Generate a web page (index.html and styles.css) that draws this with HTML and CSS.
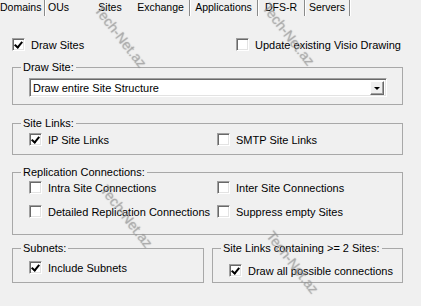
FILE: index.html
```html
<!DOCTYPE html>
<html lang="en">
<head>
	<meta charset="UTF-8">
	<title>Sites</title>
	<link rel="stylesheet" href="styles.css">
</head>
<body>
	<div class="tabs">
		<span class="tab w-domains">Domains</span>
		<span class="tab w-ous nosep">OUs</span>
		<span class="tab w-sites nosep">Sites</span>
		<span class="tab w-exch">Exchange</span>
		<span class="tab w-apps">Applications</span>
		<span class="tab w-dfs">DFS-R</span>
		<span class="tab w-srv">Servers</span>
	</div>

	<div class="page">
		<div class="toprow">
			<label class="chk col-a"><span class="cb on"></span>Draw Sites</label>
			<label class="chk"><span class="cb"></span>Update existing Visio Drawing</label>
		</div>

		<fieldset class="group g-draw">
			<legend>Draw Site:</legend>
			<div class="combo">
				<span class="combo_text">Draw entire Site Structure</span>
				<span class="combo_btn"></span>
			</div>
		</fieldset>

		<fieldset class="group g-links">
			<legend>Site Links:</legend>
			<div class="row">
				<label class="chk col-1"><span class="cb on"></span>IP Site Links</label>
				<label class="chk"><span class="cb"></span>SMTP Site Links</label>
			</div>
		</fieldset>

		<fieldset class="group g-repl">
			<legend>Replication Connections:</legend>
			<div class="row">
				<label class="chk col-1"><span class="cb"></span>Intra Site Connections</label>
				<label class="chk"><span class="cb"></span>Inter Site Connections</label>
			</div>
			<div class="row row2">
				<label class="chk col-1"><span class="cb"></span>Detailed Replication Connections</label>
				<label class="chk"><span class="cb"></span>Suppress empty Sites</label>
			</div>
		</fieldset>

		<div class="bottom">
			<fieldset class="group g-subnets">
				<legend>Subnets:</legend>
				<div class="row">
					<label class="chk"><span class="cb on"></span>Include Subnets</label>
				</div>
			</fieldset>
			<fieldset class="group g-multi">
				<legend>Site Links containing &gt;= 2 Sites:</legend>
				<div class="row">
					<label class="chk"><span class="cb on"></span>Draw all possible connections</label>
				</div>
			</fieldset>
		</div>
	</div>

	<!-- watermark of the source picture -->
	<span class="mark m1">Tech-Net.az</span>
	<span class="mark m2">Tech-Net.az</span>
	<span class="mark m3">Tech-Net.az</span>
	<span class="mark m4">Tech-Net.az</span>
</body>
</html>
```

FILE: styles.css
```css
body{
	margin: 0;
	background: #f0f0f0;
	font-family: "Liberation Sans", Arial, sans-serif;
	font-size: 11px;
	color: #000;
	width: 421px;
	height: 306px;
	overflow: hidden;
	position: relative;
}
.tabs{
	display: flex;
	height: 16px;
	line-height: 14px;
	font-size: 10.5px;
}
.tab{
	box-sizing: border-box;
	text-align: center;
	border-right: 1px solid #8a8a8a;
	box-shadow: 1px 0 0 #fff;
	white-space: nowrap;
	overflow: hidden;
}
.nosep{
	border-right: none;
	box-shadow: none;
}
.w-domains{ width: 45px; text-align: left; }
.w-ous{ width: 43px; text-align: left; padding-left: 3px; }
.w-sites{ width: 44px; }
.w-exch{ width: 58px; }
.w-apps{ width: 68px; }
.w-dfs{ width: 47px; }
.w-srv{ width: 45px; }
.page{
	padding: 22px 0 0 12px;
}
.toprow{
	display: flex;
	height: 13px;
	align-items: center;
}
.col-a{
	width: 224px;
}
.chk{
	display: flex;
	align-items: center;
	white-space: nowrap;
	height: 13px;
}
.cb{
	width: 13px;
	height: 13px;
	box-sizing: border-box;
	background: #fff;
	border-top: 1px solid #a0a0a0;
	border-left: 1px solid #a0a0a0;
	border-right: 1px solid #fff;
	border-bottom: 1px solid #fff;
	box-shadow: inset 1px 1px 0 #696969, inset -1px -1px 0 #e3e3e3;
	margin-right: 6px;
	flex: none;
	position: relative;
}
.cb.on::after{
	content: "";
	position: absolute;
	left: 3px;
	top: 1px;
	width: 3px;
	height: 6px;
	border-right: 2px solid #000;
	border-bottom: 2px solid #000;
	transform: rotate(40deg);
}
.group{
	margin: 0;
	padding: 0;
	border: 1px solid #a8a8a8;
	width: 391px;
	box-sizing: border-box;
	min-width: 0;
}
.group legend{
	margin-left: 8px;
	padding: 0 2px;
	line-height: 13px;
}
.g-draw{
	margin-top: 10px;
	padding-bottom: 7px;
}
.combo{
	display: flex;
	align-items: center;
	margin: 4px 0 0 16px;
	width: 358px;
	height: 19px;
	box-sizing: border-box;
	background: #fff;
	border-top: 1px solid #a0a0a0;
	border-left: 1px solid #a0a0a0;
	border-right: 1px solid #fff;
	border-bottom: 1px solid #fff;
	box-shadow: inset 1px 1px 0 #696969, inset -1px -1px 0 #e3e3e3;
	padding: 0 2px 0 3px;
}
.combo_text{
	flex: 1;
}
.combo_btn{
	width: 14px;
	height: 14px;
	box-sizing: border-box;
	background: #f0f0f0;
	border-top: 1px solid #fff;
	border-left: 1px solid #fff;
	border-right: 1px solid #696969;
	border-bottom: 1px solid #696969;
	box-shadow: inset -1px -1px 0 #a0a0a0;
	position: relative;
}
.combo_btn::after{
	content: "";
	position: absolute;
	left: 3px;
	top: 5px;
	border-left: 3px solid transparent;
	border-right: 3px solid transparent;
	border-top: 3px solid #000;
}
.g-links{
	margin-top: 12px;
	padding-bottom: 8px;
}
.row{
	display: flex;
	margin: 3px 0 0 16px;
}
.col-1{
	width: 188px;
}
.g-repl{
	margin-top: 11px;
	padding-bottom: 16px;
}
.g-repl .row{
	margin-top: 2px;
}
.g-repl .row2{
	margin-top: 11px;
}
.bottom{
	display: flex;
	gap: 8px;
	margin-top: 7px;
}
.g-subnets{
	width: 192px;
	padding-bottom: 5px;
}
.g-subnets .row{
	margin-top: 6px;
}
.g-multi{
	width: 191px;
	padding-bottom: 5px;
}
.g-multi .row{
	margin-top: 9px;
}
.mark{
	position: absolute;
	font-size: 14px;
	color: rgba(170,170,170,0.5);
	text-shadow: 0 0 1px rgba(90,90,90,0.5);
	transform: rotate(52deg);
	transform-origin: 0 0;
	white-space: nowrap;
	pointer-events: none;
}
.m1{ left: 104px; top: 2px; }
.m2{ left: 272px; top: 0; }
.m3{ left: 110px; top: 182px; }
.m4{ left: 276px; top: 228px; }
```
